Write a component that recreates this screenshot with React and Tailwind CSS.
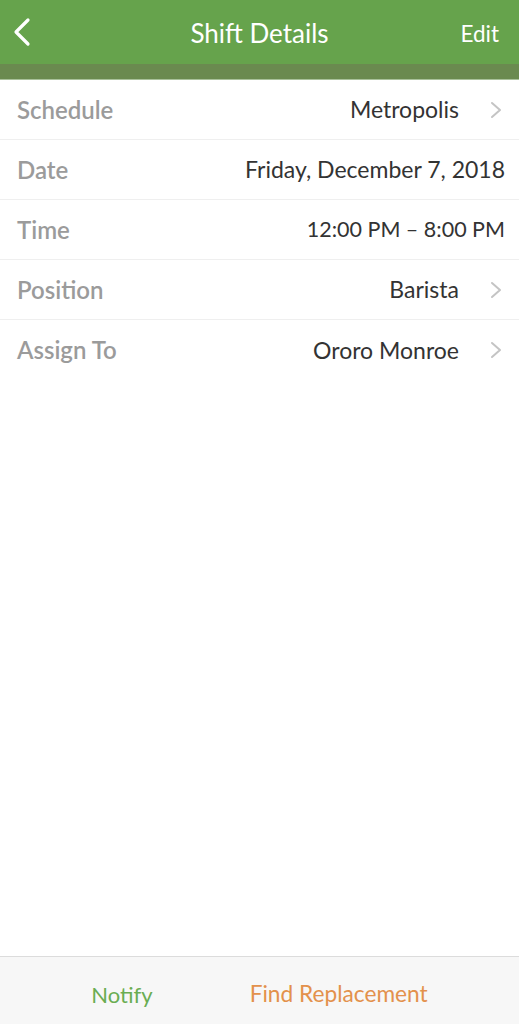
import React from "react";

function Chevron() {
  return (
    <svg width="14" height="20" viewBox="0 0 14 20" className="ml-[30px] shrink-0">
      <path d="M3 3 L11 10 L3 17" fill="none" stroke="#c4c4c4" strokeWidth="2" strokeLinecap="round" strokeLinejoin="round" />
    </svg>
  );
}

function Row({ label, value, chevron, last, valueSize }) {
  return (
    <div
      className={
        "h-[60px] flex items-center justify-between pl-[17px] " +
        (chevron ? "pr-[16px] " : "pr-[14px] ") +
        (last ? "" : "border-b border-[#efefef]")
      }
    >
      <span className="text-[#9b9b9b] font-semibold text-[24px]">{label}</span>
      <div className="flex items-center">
        <span className={"text-[#333333] " + (valueSize || "text-[23px]")}>{value}</span>
        {chevron ? <Chevron /> : null}
      </div>
    </div>
  );
}

export default function App() {
  return (
    <div className="w-[519px] h-[1024px] flex flex-col bg-white" style={{ fontFamily: "Lato, 'Open Sans', sans-serif" }}>
      <div className="h-[64px] bg-[#66a34c] flex items-center justify-between px-[13px] pt-[3px] relative">
        <svg width="20" height="30" viewBox="0 0 20 30" className="-mt-[3px]">
          <path d="M15 3 L3 15 L15 27" fill="none" stroke="#ffffff" strokeWidth="3.2" strokeLinecap="round" strokeLinejoin="round" />
        </svg>
        <span className="absolute left-1/2 -translate-x-1/2 text-white text-[26px]">Shift Details</span>
        <span className="text-white text-[22.5px] mr-[7px]">Edit</span>
      </div>
      <div className="h-[16px] bg-[#6a8a4f] border-b border-[#a9c19a]" />
      <Row label="Schedule" value="Metropolis" chevron />
      <Row label="Date" value="Friday, December 7, 2018" />
      <Row label="Time" value="12:00 PM – 8:00 PM" valueSize="text-[21.5px]" />
      <Row label="Position" value="Barista" chevron />
      <Row label="Assign To" value="Ororo Monroe" chevron last />
      <div className="flex-1" />
      <div className="h-[68px] bg-[#f7f7f7] border-t border-[#dcdcdc] flex items-center justify-center gap-[97px] pt-[8px]">
        <span className="text-[#6aad52] text-[22px]">Notify</span>
        <span className="text-[#e3914c] text-[22.7px]">Find Replacement</span>
      </div>
    </div>
  );
}
